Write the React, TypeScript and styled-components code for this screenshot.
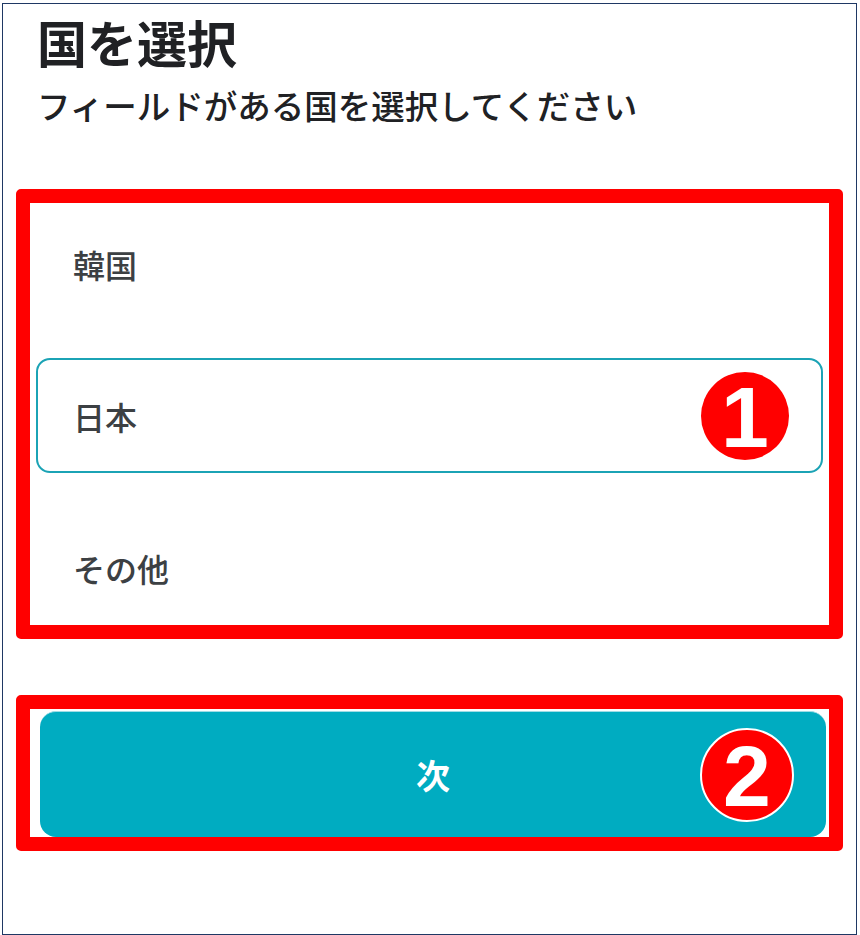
import styled, { createGlobalStyle } from "styled-components";

const GlobalStyle = createGlobalStyle`
	html, body {
		margin: 0;
		padding: 0;
		background: #ffffff;
	}
	body {
		font-family: "Noto Sans CJK JP", "Noto Sans", sans-serif;
		color: #202124;
	}
`;

const Frame = styled.div`
	box-sizing: border-box;
	width: 855px;
	height: 932px;
	margin: 3px 0 0 2px;
	border: 1px solid #1f3864;
	padding: 0 13px;
	display: flex;
	flex-direction: column;
`;

const Header = styled.div`
	padding: 5px 0 0 21px;
`;

const Title = styled.h1`
	margin: 0;
	font-size: 50px;
	line-height: 64px;
	font-weight: 700;
	color: #202124;
`;

const Subtitle = styled.p`
	margin: 10px 0 0;
	font-size: 33.5px;
	line-height: 44px;
	font-weight: 500;
	color: #202124;
`;

const Annotation = styled.div<{ $top: number }>`
	margin-top: ${(p) => p.$top}px;
	border: 14px solid #ff0000;
	border-radius: 5px;
	background: #ffffff;
`;

const OptionList = styled.div`
	display: flex;
	flex-direction: column;
	gap: 37px;
	padding: 3px 6px 0;
`;

const Option = styled.div<{ $selected?: boolean }>`
	position: relative;
	box-sizing: border-box;
	height: 115px;
	display: flex;
	align-items: center;
	padding-left: 35px;
	border: 2px solid ${(p) => (p.$selected ? "#1ba3b5" : "transparent")};
	border-radius: 14px;
	font-size: 32px;
	font-weight: 500;
	color: #3c4043;
`;

const ButtonWrap = styled.div`
	padding: 2px 3px 0 10px;
`;

const NextButton = styled.div`
	position: relative;
	box-sizing: border-box;
	height: 126px;
	display: flex;
	align-items: center;
	justify-content: center;
	background: #00acc1;
	border-top: 1px solid #9edde6;
	border-radius: 16px;
	color: #ffffff;
	font-size: 34px;
	font-weight: 700;
`;

const Badge = styled.div<{ $size: number; $ring?: boolean }>`
	position: absolute;
	right: 32px;
	top: 50%;
	transform: translateY(-50%);
	box-sizing: border-box;
	width: ${(p) => p.$size}px;
	height: ${(p) => p.$size}px;
	border-radius: 50%;
	background: #ff0000;
	border: ${(p) => (p.$ring ? "2px solid #ffffff" : "none")};
	display: flex;
	align-items: center;
	justify-content: center;
	color: #ffffff;
	font-family: "Liberation Sans", Arial, sans-serif;
	font-weight: 700;
	font-size: 86px;
	line-height: 1;
	padding-top: 2px;
`;

const countries = ["韓国", "日本", "その他"];

export default function App() {
	const selected = "日本";
	return (
		<>
			<GlobalStyle />
			<Frame>
				<Header>
					<Title>国を選択</Title>
					<Subtitle>フィールドがある国を選択してください</Subtitle>
				</Header>
				<Annotation $top={62}>
					<OptionList>
						{countries.map((c) => (
							<Option key={c} $selected={c === selected}>
								{c}
								{c === selected && <Badge $size={88}>1</Badge>}
							</Option>
						))}
					</OptionList>
				</Annotation>
				<Annotation $top={56}>
					<ButtonWrap>
						<NextButton>
							次
							<Badge $size={94} $ring>
								2
							</Badge>
						</NextButton>
					</ButtonWrap>
				</Annotation>
			</Frame>
		</>
	);
}
